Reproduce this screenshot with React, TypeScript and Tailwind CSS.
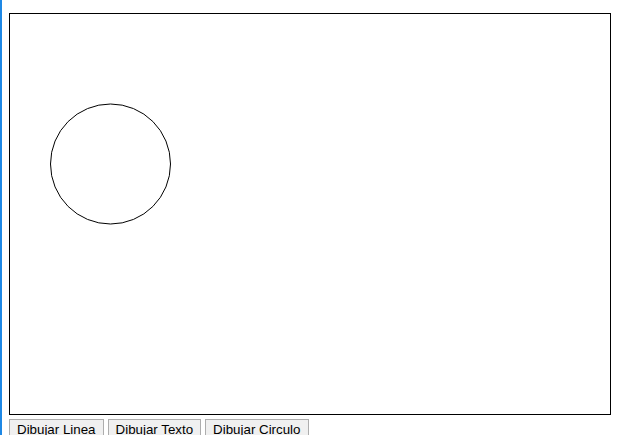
export default function App() {
  const buttons = ['Dibujar Linea', 'Dibujar Texto', 'Dibujar Circulo'];

  return (
    <div className="flex h-[435px] w-[625px] overflow-hidden bg-white">
      {/* left accent */}
      <div className="w-[2px] shrink-0 bg-[#1e88e5]" />

      <div className="flex flex-col pl-[7px] pt-[13px]">
        {/* canvas */}
        <div className="h-[402px] w-[602px] border border-black bg-white">
          <svg width="600" height="400" viewBox="0 0 600 400">
            <circle cx="100.5" cy="150" r="60" fill="none" stroke="#000" strokeWidth="1" />
          </svg>
        </div>

        {/* toolbar */}
        <div className="mt-[4px] flex gap-[4px]">
          {buttons.map((label) => (
            <button
              key={label}
              className="h-[22px] border border-[#adadad] bg-[#f0f0f0] px-[7px] text-[13.33px] leading-[20px] text-black font-['Liberation_Sans',Arial,sans-serif]"
            >
              {label}
            </button>
          ))}
        </div>
      </div>
    </div>
  );
}
